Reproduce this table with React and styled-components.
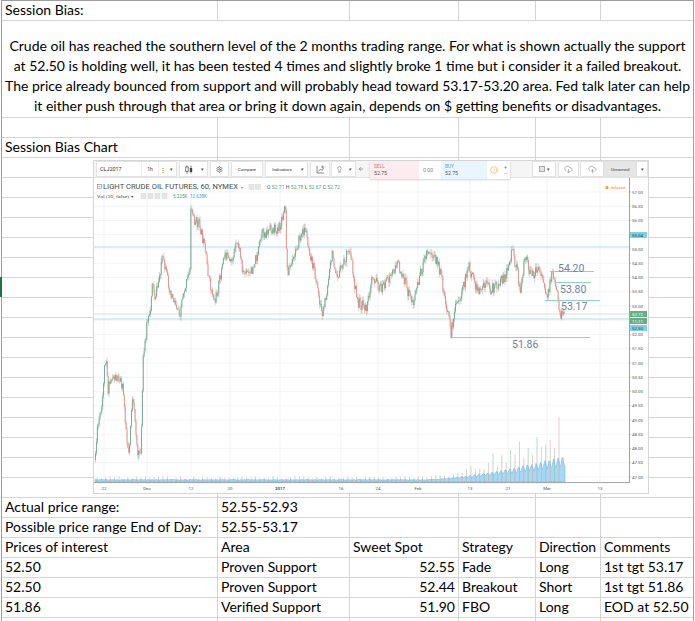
import React from 'react';
import styled, { createGlobalStyle } from 'styled-components';
import { Settings, Lightbulb, CloudDownload, CloudUpload, ArrowLeft, Info } from 'lucide-react';

const GlobalStyle = createGlobalStyle`
	* { box-sizing: border-box; }
	body {
		margin: 0;
		background: #fff;
		font-family: Lato, 'Liberation Sans', sans-serif;
		color: #000;
	}
`;

const Sheet = styled.div`
	position: relative;
	margin-left: 1px;
	width: 693px;
	border: 1px solid #9d9d9d;
	border-bottom: none;
	display: grid;
	grid-template-columns: 216px 132px 109px 77px 65px 92px;
	font-size: 14px;
`;

const Cell = styled.div`
	height: ${props => props.$h}px;
	border-bottom: 1px solid #d4d4d4;
	border-right: ${props => (props.$last ? 'none' : '1px solid #d4d4d4')};
	display: flex;
	align-items: flex-end;
	justify-content: ${props => (props.$right ? 'flex-end' : 'flex-start')};
	padding: 0 3px 1px 3px;
	line-height: 18px;
	white-space: nowrap;
`;

const Paragraph = styled.div`
	grid-column: 1 / -1;
	height: 97px;
	border-bottom: 1px solid #d4d4d4;
	display: flex;
	flex-direction: column;
	align-items: center;
	justify-content: flex-end;
	padding-bottom: 1px;
	line-height: 20px;
	white-space: nowrap;
`;

const RowMark = styled.div`
	position: absolute;
	left: -2px;
	top: 276px;
	width: 2px;
	height: 20px;
	background: #217346;
`;

const ChartFrame = styled.div`
	position: absolute;
	left: 91px;
	top: 159px;
	width: 556px;
	height: 334px;
	border: 1px solid #d6d6d6;
	background: #fff;
	display: flex;
	flex-direction: column;
	font-family: Roboto, 'Liberation Sans', sans-serif;
`;

const Toolbar = styled.div`
	height: 17px;
	flex: none;
	display: flex;
	align-items: flex-start;
	background: #f5f5f5;
	border-bottom: 1px solid #e2e2e2;
	padding: 0 0 0 1px;
`;

const Group = styled.div`
	display: flex;
	height: 16px;
	margin-left: ${props => props.$ml || 0}px;
	background: ${props => props.$bg || '#fff'};
	border: 1px solid #e3e3e3;
`;

const Btn = styled.div`
	width: ${props => props.$w}px;
	display: flex;
	align-items: center;
	justify-content: ${props => (props.$left ? 'flex-start' : 'center')};
	padding-left: ${props => (props.$left ? 3 : 0)}px;
	font-size: ${props => props.$fs || 5}px;
	color: ${props => props.$color || '#333'};
	border-right: ${props => (props.$sep ? '1px solid #ededed' : 'none')};
`;

const Caret = styled.span`
	font-size: 5px;
	color: #555;
`;

const Plain = styled.div`
	width: ${props => props.$w}px;
	height: 16px;
	display: flex;
	align-items: center;
	justify-content: center;
	color: ${props => props.$color || '#555'};
	font-size: 5px;
`;

const TradePanel = styled.div`
	position: relative;
	z-index: 1;
	display: flex;
	height: 18px;
	background: #fff;
	box-shadow: 0 1px 2px rgba(0, 0, 0, 0.18);
`;

const Quote = styled.div`
	width: ${props => props.$w}px;
	display: flex;
	flex-direction: column;
	justify-content: center;
	padding-left: 4px;
	background: ${props => props.$bg || '#fff'};
	font-size: 5.2px;
	line-height: 6.5px;
	color: ${props => props.$color || '#555'};
`;

const QuoteLabel = styled.span`
	color: ${props => props.$color};
	font-size: 4.8px;
`;

const PlusMinus = styled.div`
	width: 9px;
	display: flex;
	flex-direction: column;
	align-items: center;
	justify-content: center;
	font-size: 6px;
	line-height: 7px;
	color: #888;
`;

const Spacer = styled.div`
	flex: 1;
`;

const Swatch = styled.span`
	width: 6px;
	height: 6px;
	border: 1px solid #aaa;
	background: #e4e4e4;
	margin-right: 2px;
`;

const Plot = styled.svg`
	display: block;
	flex: none;
`;

const py = p => 192 + (57 - p) * 28.5;

const PATH = [
	[95, 460], [97, 433], [99, 420], [102, 410], [104, 373], [106, 353], [108, 390], [112, 377], [120, 377],
	[123, 390], [127, 440], [129, 452], [132, 400], [135, 417], [138, 458], [141, 447], [143, 363], [147, 323],
	[150, 317], [152, 280], [155, 297], [158, 285], [162, 257], [167, 277], [170, 290], [174, 300], [180, 313],
	[183, 293], [188, 278], [190, 266], [191, 205], [194, 220], [200, 225], [205, 252], [210, 285], [215, 302],
	[220, 278], [225, 252], [230, 265], [238, 242], [243, 272], [250, 275], [257, 255], [262, 235], [270, 230],
	[280, 228], [284, 215], [285, 200], [287, 272], [293, 262], [298, 242], [305, 228], [310, 252], [317, 285],
	[322, 315], [327, 290], [332, 255], [338, 275], [343, 265], [350, 248], [357, 302], [362, 305], [367, 308],
	[372, 275], [380, 288], [387, 282], [397, 263], [403, 275], [407, 290], [413, 303], [420, 275], [427, 253],
	[437, 260], [443, 287], [448, 313], [451, 333], [455, 310], [459, 300], [463, 290], [468, 265], [477, 290],
	[485, 285], [490, 290], [500, 283], [507, 272], [512, 250], [517, 270], [520, 290], [525, 257], [532, 277],
	[537, 267], [543, 280], [547, 297], [552, 272], [557, 287], [560, 317], [563, 313], [565, 310]
];

const makeRandom = seed => () => {
	seed = (seed + 0x6d2b79f5) | 0;
	let t = Math.imul(seed ^ (seed >>> 15), 1 | seed);
	t = (t + Math.imul(t ^ (t >>> 7), 61 | t)) ^ t;
	return ((t ^ (t >>> 14)) >>> 0) / 4294967296;
};

const interp = x => {
	for (let i = 1; i < PATH.length; i++) {
		if (x <= PATH[i][0]) {
			const [x0, y0] = PATH[i - 1];
			const [x1, y1] = PATH[i];
			return y0 + ((y1 - y0) * (x - x0)) / (x1 - x0);
		}
	}
	return PATH[PATH.length - 1][1];
};

// hourly candles squeezed to ~1px each, following the hand-read path above
const buildCandles = () => {
	const rnd = makeRandom(11);
	const out = [];
	let prev = interp(95);
	for (let x = 95.5; x <= 565; x += 0.9) {
		const close = interp(x) + (rnd() - 0.5) * 11;
		const open = prev;
		const hi = Math.min(open, close) - rnd() * 4.5;
		const lo = Math.max(open, close) + rnd() * 4.5;
		out.push({ x, open, close, hi, lo });
		prev = close;
	}
	return out;
};

const buildVolume = () => {
	const rnd = makeRandom(5);
	const pts = [];
	const bars = [];
	for (let x = 95; x <= 565; x += 1) {
		const growth = x > 425 ? Math.pow((x - 425) / 140, 1.5) * 24 : 0;
		const wave = 0.5 + 0.5 * Math.sin(((x - 95) / 4.4) * Math.PI * 2);
		const v = 1.8 + rnd() * 0.8 + growth * (0.55 + 0.45 * wave);
		pts.push([x, 482 - v]);
	}
	let k = 0;
	for (let x = 97; x <= 563; x += 4.4) {
		const growth = x > 425 ? Math.pow((x - 425) / 140, 1.5) * 24 : 0;
		const h = 3 + rnd() * 3 + growth * (1.2 + rnd() * 1.6);
		bars.push({ x, h, up: k % 2 === 0 });
		k++;
	}
	const d = 'M95 482 ' + pts.map(([x, y]) => `L${x} ${y.toFixed(1)}`).join(' ') + ' L565 482 Z';
	return { d, bars };
};

const CANDLES = buildCandles();
const VOLUME = buildVolume();

const TIME_LABELS = [
	['22', 104], ['Dec', 147], ['12', 191], ['20', 230], ['2017', 280], ['16', 341],
	['24', 378], ['Feb', 418], ['13', 470], ['21', 508], ['Mar', 547], ['13', 600]
];

const PRICES = [];
for (let p = 57; p >= 47; p -= 0.5) PRICES.push(p);

const LEVELS = [
	{ y: 271.5, x1: 550, x2: 594, label: '54.20', lx: 558, ly: 271.5 },
	{ y: 282.5, x1: 555, x2: 591, label: '53.80', lx: 560, ly: 292.5 },
	{ y: 300.5, x1: 545, x2: 600, label: '53.17', lx: 561, ly: 310 },
	{ y: 337.5, x1: 451, x2: 590, label: '51.86', lx: 512, ly: 348 }
];

const BADGES = [
	{ y: 235, text: '55.04', bg: '#7fd0e1', color: '#16466e' },
	{ y: 314, text: '52.72', bg: '#63b083', color: '#fff' },
	{ y: 321, text: '11:11', bg: '#63b083', color: '#fff' },
	{ y: 328, text: '52.50', bg: '#7fd0e1', color: '#16466e' }
];

const PriceChart = () => (
	<Plot width="554" height="315" viewBox="94 178 554 315">
		{PRICES.map(p => (
			<line key={p} x1="94" x2="629" y1={py(p)} y2={py(p)} stroke="#f1f3f4" strokeWidth="0.8" />
		))}
		{TIME_LABELS.map(([t, x], i) => (
			<line key={i} x1={x} x2={x} y1="178" y2="482" stroke="#eef0f1" strokeWidth="0.8" />
		))}

		<path d={VOLUME.d} fill="#a8d8f5" stroke="#5ab4ea" strokeWidth="0.5" />
		{VOLUME.bars.map((b, i) => (
			<line key={i} x1={b.x} x2={b.x} y1="482" y2={482 - b.h} stroke={b.up ? '#7cc095' : '#e59a93'} strokeWidth="0.7" opacity="0.75" />
		))}

		<line x1="94" x2="629" y1="247" y2="247" stroke="#b6dfe7" strokeWidth="1.2" />
		<line x1="94" x2="629" y1="314" y2="314" stroke="#d3e3df" strokeWidth="1" />
		<line x1="94" x2="629" y1="319" y2="319" stroke="#b6dfe7" strokeWidth="1.2" />

		{CANDLES.map((c, i) => {
			const up = c.close < c.open;
			const col = up ? '#5f9c80' : '#d9837a';
			return (
				<g key={i}>
					<line x1={c.x} x2={c.x} y1={c.hi} y2={c.lo} stroke={col} strokeWidth="0.4" />
					<rect x={c.x - 0.35} y={Math.min(c.open, c.close)} width="0.7" height={Math.max(0.5, Math.abs(c.open - c.close))} fill={col} />
				</g>
			);
		})}

		{LEVELS.map(l => (
			<g key={l.label}>
				<line x1={l.x1} x2={l.x2} y1={l.y} y2={l.y} stroke="#93d1c0" strokeWidth="1" />
				<text x={l.lx} y={l.ly} fontSize="10.5" fill="#6f8199" fontFamily="Roboto, 'Liberation Sans', sans-serif">
					{l.label}
				</text>
			</g>
		))}

		<line x1="629.5" x2="629.5" y1="178" y2="483" stroke="#8a8a8a" strokeWidth="0.8" />
		<line x1="94" x2="629.5" y1="482.6" y2="482.6" stroke="#8a8a8a" strokeWidth="0.8" />
		{PRICES.map(p => (
			<g key={p}>
				<line x1="629.5" x2="631" y1={py(p)} y2={py(p)} stroke="#8a8a8a" strokeWidth="0.5" />
				<text x="632" y={py(p) + 1.5} fontSize="4.4" fill="#555">
					{p.toFixed(2)}
				</text>
			</g>
		))}
		{BADGES.map(b => (
			<g key={b.text}>
				<rect x="630" y={b.y - 3} width="17" height="6" fill={b.bg} />
				<text x="632" y={b.y + 1.5} fontSize="4.4" fill={b.color}>
					{b.text}
				</text>
			</g>
		))}
		{TIME_LABELS.map(([t, x], i) => (
			<text key={i} x={x} y="490" fontSize="4.4" fill="#555" textAnchor="middle" fontWeight={t === '2017' ? 700 : 400}>
				{t}
			</text>
		))}

		<rect x="97.5" y="184.5" width="4" height="4" fill="none" stroke="#666" strokeWidth="0.5" />
		<line x1="98.5" x2="100.5" y1="186.5" y2="186.5" stroke="#666" strokeWidth="0.5" />
		<text x="103" y="189.3" fontSize="6.6" fill="#4a4a4a" textLength="135" lengthAdjust="spacingAndGlyphs">
			LIGHT CRUDE OIL FUTURES, 60, NYMEX
		</text>
		<text x="241" y="188.6" fontSize="4" fill="#888">▾</text>
		<rect x="249" y="184.5" width="5" height="5" fill="#e6e6e6" stroke="#cfcfcf" strokeWidth="0.4" />
		<rect x="255.5" y="184.5" width="5" height="5" fill="#e6e6e6" stroke="#cfcfcf" strokeWidth="0.4" />
		<text x="267" y="189" fontSize="4.6" fill="#555" textLength="73" lengthAdjust="spacingAndGlyphs">
			O <tspan fill="#53a77c">52.71</tspan> H <tspan fill="#53a77c">52.78</tspan> L <tspan fill="#53a77c">52.67</tspan> C{' '}
			<tspan fill="#53a77c">52.72</tspan>
		</text>
		<text x="97" y="197.5" fontSize="4.4" fill="#555" textLength="36" lengthAdjust="spacingAndGlyphs">
			Vol (20, false) ▾
		</text>
		{[141, 148, 155, 162].map(x => (
			<rect key={x} x={x} y="193.5" width="5" height="5" fill="#e6e6e6" stroke="#cfcfcf" strokeWidth="0.4" />
		))}
		<text x="173" y="197.5" fontSize="4.6" fill="#44a36f">5.225K</text>
		<text x="190" y="197.5" fontSize="4.6" fill="#3b9fe0">12.638K</text>
		<circle cx="607" cy="187.5" r="1.5" fill="#f7931e" />
		<text x="610.5" y="189" fontSize="4.4" fill="#f7931e">delayed</text>
	</Plot>
);

const CandleIcon = () => (
	<svg width="8" height="9" viewBox="0 0 8 9">
		<line x1="2" x2="2" y1="0.5" y2="8.5" stroke="#444" strokeWidth="0.7" />
		<rect x="0.8" y="2" width="2.4" height="4.5" fill="#fff" stroke="#444" strokeWidth="0.7" />
		<line x1="6" x2="6" y1="0.5" y2="8.5" stroke="#444" strokeWidth="0.7" />
		<rect x="4.8" y="3" width="2.4" height="4" fill="#444" />
	</svg>
);

const TemplateIcon = () => (
	<svg width="9" height="9" viewBox="0 0 9 9" fill="none" stroke="#555" strokeWidth="0.7">
		<path d="M1 1 V8 H8" />
		<path d="M2.5 6.5 L4.5 4 L6 5.5 L8 2.5" />
		<circle cx="6.5" cy="1.8" r="0.8" />
	</svg>
);

const ChartToolbar = () => (
	<Toolbar>
		<Group $ml={1}>
			<Btn $w={45} $left $fs={5.4} $sep>CLJ2017</Btn>
			<Btn $w={17} $sep>1h</Btn>
			<Btn $w={8} $fs={6}>⋮</Btn>
			<Btn $w={9}><Caret>▾</Caret></Btn>
		</Group>
		<Group $ml={2}>
			<Btn $w={18}><CandleIcon /></Btn>
			<Btn $w={9}><Caret>▾</Caret></Btn>
		</Group>
		<Group $ml={2}>
			<Btn $w={17}><Settings size={7} strokeWidth={2} color="#444" /></Btn>
		</Group>
		<Group $ml={2}>
			<Btn $w={30} $fs={4.4}>Compare</Btn>
		</Group>
		<Group $ml={2}>
			<Btn $w={32} $fs={4.4}>Indicators</Btn>
			<Btn $w={9}><Caret>▾</Caret></Btn>
		</Group>
		<Group $ml={2}>
			<Btn $w={18}><TemplateIcon /></Btn>
		</Group>
		<Group $ml={1}>
			<Btn $w={14}><Lightbulb size={7} strokeWidth={1.6} color="#555" /></Btn>
			<Btn $w={9}><Caret>▾</Caret></Btn>
		</Group>
		<Plain $w={10}><ArrowLeft size={6} strokeWidth={2} /></Plain>
		<Plain $w={4} $color="#bbb">⁞</Plain>
		<TradePanel>
			<Quote $w={49} $bg="#fdeced">
				<QuoteLabel $color="#ef6a78">SELL</QuoteLabel>
				52.75
			</Quote>
			<Quote $w={22} $color="#888">0.00</Quote>
			<Quote $w={46} $bg="#e9f6fd">
				<QuoteLabel $color="#48aae2">BUY</QuoteLabel>
				52.75
			</Quote>
			<Btn $w={14}><Info size={8} strokeWidth={1.8} color="#f5a623" /></Btn>
			<PlusMinus>
				<span>+</span>
				<span>−</span>
			</PlusMinus>
		</TradePanel>
		<Spacer />
		<Group>
			<Btn $w={22}>
				<Swatch />
				<Caret>▾</Caret>
			</Btn>
		</Group>
		<Group $ml={2}>
			<Btn $w={19}><CloudDownload size={9} strokeWidth={1.4} color="#777" /></Btn>
		</Group>
		<Group $ml={1}>
			<Btn $w={22}><CloudUpload size={9} strokeWidth={1.4} color="#777" /></Btn>
		</Group>
		<Group $bg="#e6e6e6">
			<Btn $w={30} $fs={4.4} $color="#444">Unnamed</Btn>
		</Group>
		<Group>
			<Btn $w={10}><Caret>▾</Caret></Btn>
		</Group>
	</Toolbar>
);

const blank = ['', '', '', '', '', ''];

const ROWS = [
	{ h: 20, cells: ['Session Bias:', '', '', '', '', ''] },
	{ paragraph: true },
	{ h: 20, cells: blank },
	{ h: 20, cells: ['Session Bias Chart', '', '', '', '', ''] },
	...Array.from({ length: 17 }, () => ({ h: 20, cells: blank })),
	{ h: 20, cells: ['Actual price range:', '52.55-52.93', '', '', '', ''] },
	{ h: 20, cells: ['Possible price range End of Day:', '52.55-53.17', '', '', '', ''] },
	{ h: 20, cells: ['Prices of interest', 'Area', 'Sweet Spot', 'Strategy', 'Direction', 'Comments'] },
	{ h: 20, cells: ['52.50', 'Proven Support', '52.55', 'Fade', 'Long', '1st tgt 53.17'], num: true },
	{ h: 20, cells: ['52.50', 'Proven Support', '52.44', 'Breakout', 'Short', '1st tgt 51.86'], num: true },
	{ h: 20, cells: ['51.86', 'Verified Support', '51.90', 'FBO', 'Long', 'EOD at 52.50'], num: true },
	{ h: 6, cells: blank }
];

const PARAGRAPH = [
	'Crude oil has reached the southern level of the 2 months trading range. For what is shown actually the support',
	'at 52.50 is holding well, it has been tested 4 times and slightly broke 1 time but i consider it a failed breakout.',
	'The price already bounced from support and will probably head toward 53.17-53.20 area. Fed talk later can help',
	'it either push through that area or bring it down again, depends on $ getting benefits or disadvantages.'
];

const App = () => (
	<>
		<GlobalStyle />
		<Sheet>
			{ROWS.map((row, r) =>
				row.paragraph ? (
					<Paragraph key={r}>
						{PARAGRAPH.map(line => (
							<span key={line}>{line}</span>
						))}
					</Paragraph>
				) : (
					row.cells.map((text, c) => (
						<Cell key={`${r}-${c}`} $h={row.h} $last={c === 5} $right={row.num && c === 2}>
							{text}
						</Cell>
					))
				)
			)}
			<RowMark />
			<ChartFrame>
				<ChartToolbar />
				<PriceChart />
			</ChartFrame>
		</Sheet>
	</>
);

export default App;
